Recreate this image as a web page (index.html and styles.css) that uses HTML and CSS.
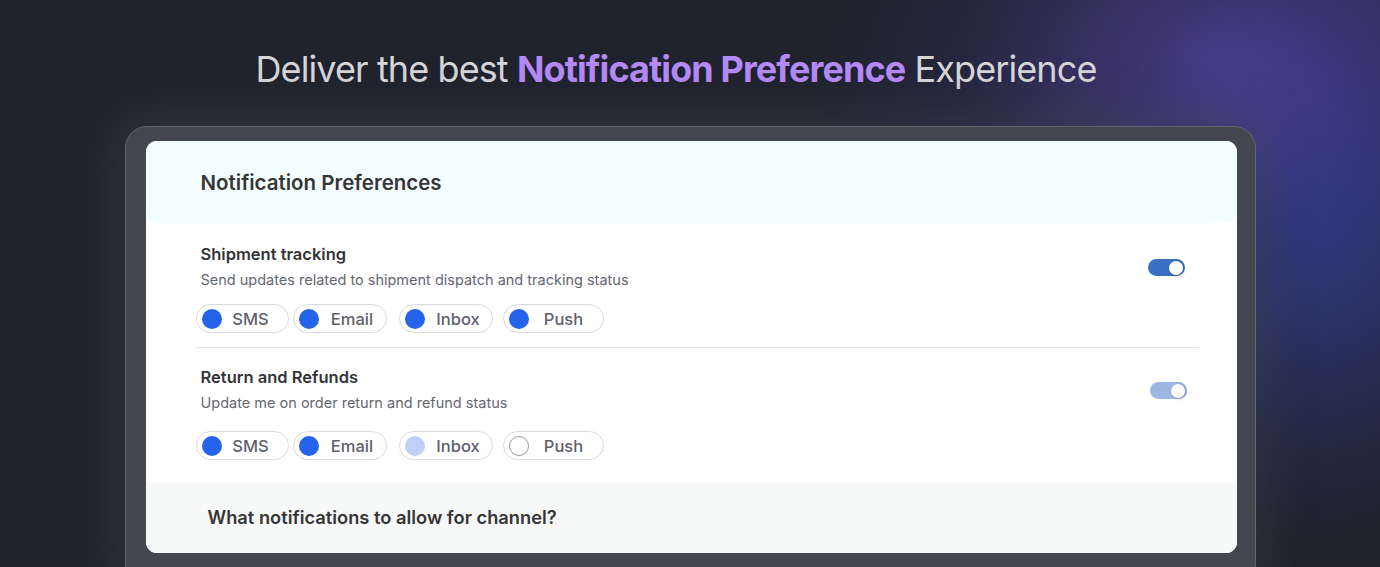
FILE: index.html
```html
<!DOCTYPE html>
<html lang="en">
<head>
<meta charset="utf-8">
<title>Notification Preferences</title>
<link rel="stylesheet" href="styles.css">
</head>
<body>
<div class="page">
  <h1 class="hero">Deliver the best <strong>Notification Preference</strong> Experience</h1>
  <div class="frame">
    <div class="card">
      <div class="card-head">Notification Preferences</div>
      <div class="section">
        <div class="row">
          <div class="info">
            <div class="s-title">Shipment tracking</div>
            <div class="s-desc">Send updates related to shipment dispatch and tracking status</div>
          </div>
          <div class="toggle"><span class="knob"></span></div>
        </div>
        <div class="chips">
          <div class="chip w-sms"><span class="dot on"></span><span class="lbl">SMS</span></div>
          <div class="chip w-email"><span class="dot on"></span><span class="lbl">Email</span></div>
          <div class="chip w-inbox gap-l"><span class="dot on"></span><span class="lbl">Inbox</span></div>
          <div class="chip w-push gap-m"><span class="dot on"></span><span class="lbl">Push</span></div>
        </div>
      </div>
      <div class="section second">
        <div class="row">
          <div class="info">
            <div class="s-title">Return and Refunds</div>
            <div class="s-desc">Update me on order return and refund status</div>
          </div>
          <div class="toggle faded shift"><span class="knob"></span></div>
        </div>
        <div class="chips">
          <div class="chip w-sms"><span class="dot on"></span><span class="lbl">SMS</span></div>
          <div class="chip w-email"><span class="dot on"></span><span class="lbl">Email</span></div>
          <div class="chip w-inbox gap-l"><span class="dot pale"></span><span class="lbl">Inbox</span></div>
          <div class="chip w-push gap-m"><span class="dot off"></span><span class="lbl">Push</span></div>
        </div>
      </div>
      <div class="card-foot">What notifications to allow for channel?</div>
    </div>
  </div>
</div>
</body>
</html>
```
FILE: styles.css
```css
* { box-sizing: border-box; }
html, body { margin: 0; padding: 0; }
body {
  width: 1380px;
  height: 567px;
  overflow: hidden;
  font-family: Inter, "Noto Sans", sans-serif;
  background-color: #20222d;
  background-image:
    radial-gradient(ellipse 260px 200px at 1220px 60px, rgba(92, 70, 170, 0.5), rgba(92, 70, 170, 0) 100%),
    radial-gradient(ellipse 220px 320px at 1320px 220px, rgba(50, 70, 175, 0.5), rgba(50, 70, 175, 0) 100%),
    radial-gradient(ellipse 440px 340px at 1250px 120px, rgba(70, 60, 150, 0.45), rgba(70, 60, 150, 0) 100%);
}
.page {
  display: flex;
  flex-direction: column;
  align-items: center;
}
.hero {
  margin: 46px 28px 0 0;
  height: 46px;
  line-height: 46px;
  font-size: 36px;
  font-weight: 400;
  letter-spacing: -0.9px;
  color: #d6d6da;
  white-space: nowrap;
}
.hero strong {
  font-weight: 700;
  color: #b48af6;
}
.frame {
  margin-top: 34px;
  width: 1131px;
  height: 460px;
  padding: 14px 18px 0 20px;
  background: #454750;
  border: 1px solid #63656e;
  border-radius: 22px;
  box-shadow: 0 0 40px 16px rgba(70, 72, 84, 0.35);
}
.card {
  background: #ffffff;
  border-radius: 11px;
  overflow: hidden;
  height: 412px;
  display: flex;
  flex-direction: column;
}
.card-head {
  height: 82px;
  background: #f4feff;
  border-radius: 0 0 10px 10px;
  padding-left: 55px;
  display: flex;
  align-items: center;
  font-size: 20.5px;
  font-weight: 600;
  color: #363636;
}
.section {
  margin: 0 38px 0 50px;
  padding-top: 21px;
  padding-bottom: 14px;
  border-bottom: 1px solid #e4e5e6;
}
.section.second {
  padding-top: 19px;
  padding-bottom: 23px;
  border-bottom: none;
}
.section.second .chips { margin-top: 18px; }
.row {
  display: flex;
  justify-content: space-between;
  align-items: center;
}
.info { padding-left: 5px; }
.s-title {
  font-size: 16.5px;
  line-height: 20px;
  font-weight: 600;
  color: #333438;
}
.s-desc {
  margin-top: 6px;
  font-size: 14.5px;
  line-height: 20px;
  color: #646772;
}
.toggle {
  width: 37px;
  height: 17px;
  border-radius: 9px;
  background: #3a6fc2;
  margin-right: 14px;
  position: relative;
  margin-top: 1px;
}
.toggle.faded { background: #9cb7e2; }
.toggle.shift { margin-right: 12px; }
.knob {
  position: absolute;
  right: 2px;
  top: 1.5px;
  width: 14px;
  height: 14px;
  border-radius: 50%;
  background: #ffffff;
  box-shadow: 1px 1px 3px rgba(0, 0, 0, 0.25);
}
.chips {
  display: flex;
  gap: 4px;
  margin-top: 14px;
}
.chip {
  height: 29px;
  border: 1px solid #d9dadc;
  border-radius: 15px;
  display: flex;
  align-items: center;
  padding-left: 5px;
  padding-right: 4px;
}
.w-sms { width: 93px; padding-right: 8px; }
.w-email { width: 94px; padding-left: 5px; padding-right: 0; }
.w-inbox { width: 94px; padding-right: 0; }
.w-push { width: 101px; }
.gap-l { margin-left: 8px; }
.gap-m { margin-left: 6px; }
.dot {
  width: 20px;
  height: 20px;
  border-radius: 50%;
  flex: none;
}
.dot.on { background: #2563eb; }
.dot.pale { background: #bfd0f6; }
.dot.off { background: #fff; border: 1px solid #9a9ca2; }
.lbl {
  flex: 1;
  text-align: center;
  font-size: 16.5px;
  font-weight: 500;
  color: #5e616c;
}
.card-foot {
  flex: 1;
  background: #f7f9f9;
  padding-left: 62px;
  display: flex;
  align-items: center;
  font-size: 18.3px;
  font-weight: 600;
  color: #363636;
  padding-bottom: 2px;
}
```
